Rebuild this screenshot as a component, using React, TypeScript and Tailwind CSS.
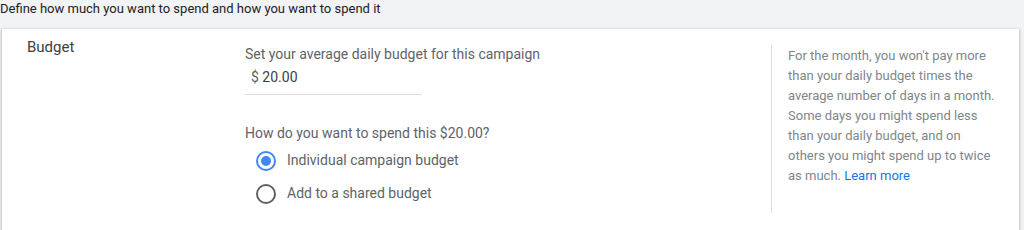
import { useState } from 'react'

const helpText =
    "For the month, you won't pay more than your daily budget times the average number of days in a month. Some days you might spend less than your daily budget, and on others you might spend up to twice as much."

function Radio({ checked, label, onClick }: { checked: boolean; label: string; onClick: () => void }) {
    return (
        <button onClick={onClick} className="flex items-center h-[33px] text-left">
            <span
                className={`flex items-center justify-center w-[20px] h-[20px] rounded-full border-2 ${
                    checked ? 'border-[#4285f4]' : 'border-[#5f6368]'
                }`}
            >
                {checked && <span className="w-[10px] h-[10px] rounded-full bg-[#4285f4]" />}
            </span>
            <span className="ml-[11px] text-[14px] text-[#5f6368]">{label}</span>
        </button>
    )
}

export default function App() {
    const [shared, setShared] = useState(false)

    return (
        <div className="w-[1024px] h-[230px] overflow-hidden bg-[#f1f3f4] font-['Roboto',sans-serif]">
            <div className="h-[29px] pt-[1px] text-[13px] leading-[16px] text-[#202124]">
                Define how much you want to spend and how you want to spend it
            </div>
            <div className="ml-[2px] w-[1017px] h-[210px] bg-white shadow-[0_1px_2px_rgba(60,64,67,0.3),0_1px_3px_1px_rgba(60,64,67,0.15)] flex">
                <div className="w-[243px] pl-[25px] pt-[8px] text-[15px] leading-[20px] text-[#3c4043]">Budget</div>

                <div className="w-[526px] pt-[15px]">
                    <div className="text-[14px] leading-[20px] text-[#5f6368]">
                        Set your average daily budget for this campaign
                    </div>
                    <div className="mt-[3px] w-[177px] h-[28px] border-b border-[#dadce0] pl-[6px] text-[14px] leading-[20px] text-[#3c4043]">
                        <span className="text-[#5f6368]">$</span> 20.00
                    </div>
                    <div className="mt-[28px] text-[14px] leading-[20px] text-[#5f6368]">
                        How do you want to spend this $20.00?
                    </div>
                    <div className="mt-[1px] pl-[11px] flex flex-col">
                        <Radio checked={!shared} label="Individual campaign budget" onClick={() => setShared(false)} />
                        <Radio checked={shared} label="Add to a shared budget" onClick={() => setShared(true)} />
                    </div>
                </div>

                <div className="mt-[16px] h-[168px] border-l border-[#dadce0] pl-[16px] pt-[1px]">
                    <p className="w-[212px] text-[13px] leading-[20px] text-[#80868b]">
                        {helpText}{' '}
                        <a href="#" className="text-[#1a73e8]">
                            Learn more
                        </a>
                    </p>
                </div>
            </div>
        </div>
    )
}
